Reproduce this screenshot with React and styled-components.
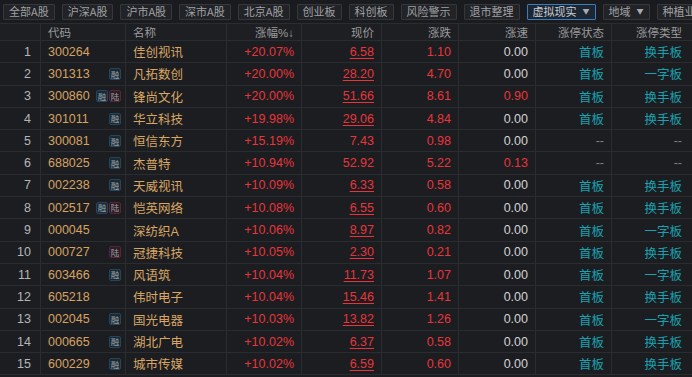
import styled, { createGlobalStyle } from "styled-components";

const GlobalStyle = createGlobalStyle`
    html, body {
        margin: 0;
        padding: 0;
        background: #1c1d21;
    }
    * {
        box-sizing: border-box;
    }
`

const COLS = "41px 85px 101px 75px 80px 77px 77px 76px 80px";

const Page = styled.div`
    width: 692px;
    height: 377px;
    overflow: hidden;
    background: #1c1d21;
    font-family: "Liberation Sans", "Noto Sans CJK SC", sans-serif;
`

const TabBar = styled.nav`
    height: 23px;
    display: flex;
    align-items: center;
    gap: 7px;
    padding-left: 3px;
    background: #1a1b1e;
    overflow: hidden;
    white-space: nowrap;
`

const Tab = styled.button`
    flex: none;
    height: 16px;
    display: flex;
    align-items: center;
    gap: 6px;
    padding: 0 5px;
    border: 1px solid ${(props) => props.$active ? "#3a7cbc" : "#35373c"};
    border-radius: 1px;
    background: ${(props) => props.$active ? "#1d2734" : "#222327"};
    color: ${(props) => props.$active ? "#c9ccd1" : "#a0a1a4"};
    font-family: "Noto Sans CJK SC", sans-serif;
    font-size: 11px;
    line-height: 1;

    & .caret {
        font-size: 7px;
        color: #a9abb0;
    }
`

const Row = styled.div`
    display: grid;
    grid-template-columns: ${COLS};
    height: ${(props) => props.$head ? "18px" : "22.3px"};
    border-bottom: 1px solid #2b2c30;
    ${(props) => props.$head && "border-top: 1px solid #2b2c30;"}
    background: ${(props) => props.$head ? "#1e1f23" : "#1c1d21"};
`

const Cell = styled.div`
    display: flex;
    align-items: center;
    justify-content: ${(props) => props.$align === "left" ? "flex-start" : "flex-end"};
    padding: ${(props) => props.$align === "left" ? "0 4px 0 7px" : "0 7px 0 0"};
    border-right: 1px solid #2b2c30;
    font-size: ${(props) => props.$head ? "11.5px" : "12.5px"};
    color: ${(props) => props.$color || "#d3d3d3"};
    white-space: nowrap;
    overflow: hidden;

    &:last-child {
        border-right: none;
        padding-right: 10px;
    }
`

const Num = styled(Cell)`
    padding-right: 9px;
    color: #b5b5b7;
`

const CodeCell = styled(Cell)`
    justify-content: space-between;
    color: #d6a261;
`

const Badges = styled.span`
    display: flex;
    gap: 1px;
`

const Badge = styled.span`
    width: 12px;
    height: 12px;
    display: flex;
    align-items: center;
    justify-content: center;
    border: 1px solid ${(props) => props.$kind === "lu" ? "#5b2334" : "#1f4760"};
    border-radius: 2px;
    background: ${(props) => props.$kind === "lu" ? "#2a1d23" : "#1d2831"};
    color: #9aa3ab;
    font-family: "Noto Sans CJK SC", sans-serif;
    font-size: 8.5px;
    line-height: 1;
`

const Price = styled.span`
    text-decoration: ${(props) => props.$link ? "underline" : "none"};
    text-underline-offset: 2px;
`

const HEAD = ["代码", "名称", "涨幅%↓", "现价", "涨跌", "涨速", "涨停状态", "涨停类型"];

const tabs = ["全部A股", "沪深A股", "沪市A股", "深市A股", "北京A股", "创业板", "科创板", "风险警示", "退市整理"];

const rows = [
    ["300264", [], "佳创视讯", "+20.07%", "6.58", "1.10", "0.00", "首板", "换手板"],
    ["301313", ["rong"], "凡拓数创", "+20.00%", "28.20", "4.70", "0.00", "首板", "一字板"],
    ["300860", ["rong", "lu"], "锋尚文化", "+20.00%", "51.66", "8.61", "0.90", "首板", "换手板"],
    ["301011", ["rong"], "华立科技", "+19.98%", "29.06", "4.84", "0.00", "首板", "换手板"],
    ["300081", ["rong"], "恒信东方", "+15.19%", "7.43", "0.98", "0.00", "--", "--"],
    ["688025", ["rong"], "杰普特", "+10.94%", "52.92", "5.22", "0.13", "--", "--"],
    ["002238", ["rong"], "天威视讯", "+10.09%", "6.33", "0.58", "0.00", "首板", "换手板"],
    ["002517", ["rong", "lu"], "恺英网络", "+10.08%", "6.55", "0.60", "0.00", "首板", "换手板"],
    ["000045", [], "深纺织A", "+10.06%", "8.97", "0.82", "0.00", "首板", "一字板"],
    ["000727", ["lu"], "冠捷科技", "+10.05%", "2.30", "0.21", "0.00", "首板", "换手板"],
    ["603466", ["rong"], "风语筑", "+10.04%", "11.73", "1.07", "0.00", "首板", "一字板"],
    ["605218", [], "伟时电子", "+10.04%", "15.46", "1.41", "0.00", "首板", "换手板"],
    ["002045", ["rong"], "国光电器", "+10.03%", "13.82", "1.26", "0.00", "首板", "一字板"],
    ["000665", ["rong"], "湖北广电", "+10.02%", "6.37", "0.58", "0.00", "首板", "换手板"],
    ["600229", ["rong"], "城市传媒", "+10.02%", "6.59", "0.60", "0.00", "首板", "换手板"],
];

const RED = "#e6363b";
const TEAL = "#18a1b0";
const GOLD = "#d9a765";

export default function App () {
    return (
        <>
            <GlobalStyle />
            <Page>
                <TabBar>
                    {tabs.map((t) => <Tab key={t}>{t}</Tab>)}
                    <Tab $active>虚拟现实<span className="caret">▼</span></Tab>
                    <Tab>地域<span className="caret">▼</span></Tab>
                    <Tab>种植业</Tab>
                </TabBar>
                <Row $head>
                    <Num $head />
                    {HEAD.map((h, i) => (
                        <Cell key={h} $head $align={i < 2 ? "left" : "right"} $color="#9b9b9d">{h}</Cell>
                    ))}
                </Row>
                {rows.map((r, i) => {
                    const [code, badges, name, pct, price, chg, speed, status, type] = r;
                    const limit = status !== "--";
                    return (
                        <Row key={code}>
                            <Num>{i + 1}</Num>
                            <CodeCell $align="left">
                                {code}
                                <Badges>
                                    {badges.map((b) => (
                                        <Badge key={b} $kind={b}>{b === "lu" ? "陆" : "融"}</Badge>
                                    ))}
                                </Badges>
                            </CodeCell>
                            <Cell $align="left" $color={GOLD}>{name}</Cell>
                            <Cell $color={RED}>{pct}</Cell>
                            <Cell $color={RED}><Price $link={limit}>{price}</Price></Cell>
                            <Cell $color={RED}>{chg}</Cell>
                            <Cell $color={speed === "0.00" ? "#d3d3d3" : RED}>{speed}</Cell>
                            <Cell $color={limit ? TEAL : "#7d7e82"}>{status}</Cell>
                            <Cell $color={limit ? TEAL : "#7d7e82"}>{type}</Cell>
                        </Row>
                    );
                })}
            </Page>
        </>
    )
}
